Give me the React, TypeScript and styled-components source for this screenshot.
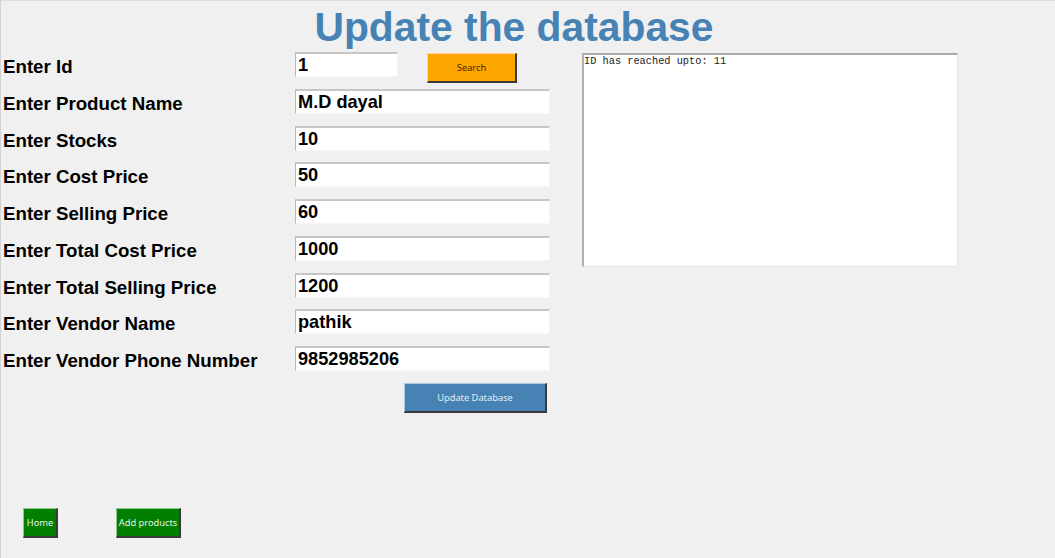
import React from "react";
import styled, { createGlobalStyle } from "styled-components";

const GlobalStyle = createGlobalStyle`
  html, body {
    margin: 0;
    padding: 0;
    background: #f0f0f0;
  }
  body {
    font-family: "Liberation Sans", Arial, sans-serif;
  }
  * { box-sizing: border-box; }
`;

const Page = styled.div`
  min-height: 100vh;
  display: flex;
  flex-direction: column;
  border-top: 1px solid #dcdcdc;
  border-left: 1px solid #d2d2d2;
  padding-bottom: 20px;
`;

const Title = styled.h1`
  margin: 6px 28px 0 0;
  text-align: center;
  font-family: "Liberation Sans", Arial, sans-serif;
  font-weight: bold;
  font-size: 40.8px;
  line-height: 40px;
  color: #4682b4;
`;

const Main = styled.div`
  display: flex;
  align-items: flex-start;
  margin-top: 5px;
  padding-left: 2px;
`;

const Form = styled.div`
  width: 547px;
  display: flex;
  flex-direction: column;
  gap: 11.75px;
`;

const Row = styled.div`
  display: grid;
  grid-template-columns: 292px 1fr;
  height: 25px;
`;

const Label = styled.label`
  font-family: "Liberation Sans", Arial, sans-serif;
  font-weight: bold;
  font-size: 18.7px;
  line-height: 25px;
  padding-top: 2px;
  color: #000;
  white-space: nowrap;
`;

const FieldGroup = styled.div`
  display: flex;
  align-items: flex-start;
`;

const Input = styled.input<{ $width?: number }>`
  width: ${(p) => (p.$width ? `${p.$width}px` : "100%")};
  height: 25px;
  margin: 0;
  padding: 1px 0 0 2px;
  background: #ffffff;
  border-top: 2px solid #c6c6c6;
  border-left: 1px solid #b8b8b8;
  border-right: 1px solid #f7f7f7;
  border-bottom: 1px solid #f7f7f7;
  font-family: "Liberation Sans", Arial, sans-serif;
  font-weight: bold;
  font-size: 18.2px;
  color: #000;
  outline: none;
`;

const Button = styled.button<{
  $bg: string;
  $fg: string;
  $w: number;
  $ml?: number;
  $mt?: number;
}>`
  width: ${(p) => p.$w}px;
  height: 30px;
  margin: ${(p) => p.$mt ?? 0}px 0 0 ${(p) => p.$ml ?? 0}px;
  padding: 0;
  background: ${(p) => p.$bg};
  color: ${(p) => p.$fg};
  border-top: 1px solid rgba(255, 255, 255, 0.55);
  border-left: 1px solid rgba(255, 255, 255, 0.55);
  border-right: 2px solid #3a3a3a;
  border-bottom: 2px solid #3a3a3a;
  font-family: "Noto Sans", "Open Sans", sans-serif;
  font-size: 9.3px;
  line-height: 1;
  cursor: pointer;
  flex-shrink: 0;
`;

const UpdateButton = styled(Button)`
  align-self: flex-end;
  margin-right: 3px;
`;

const Output = styled.div`
  margin-left: 32px;
  margin-top: 1px;
  width: 376px;
  height: 214px;
  background: #ffffff;
  border-top: 2px solid #a9a9a9;
  border-left: 2px solid #b0b0b0;
  border-right: 1px solid #e6e6e6;
  border-bottom: 1px solid #e6e6e6;
  padding: 0;
  font-family: "Liberation Mono", "Courier New", monospace;
  font-size: 10.3px;
  line-height: 12px;
  color: #222;
  white-space: pre;
`;

const Footer = styled.div`
  margin-top: auto;
  display: flex;
  padding-left: 22px;
  gap: 58px;
`;

const fields: { label: string; value: string }[] = [
  { label: "Enter Product Name", value: "M.D dayal" },
  { label: "Enter Stocks", value: "10" },
  { label: "Enter Cost Price", value: "50" },
  { label: "Enter Selling Price", value: "60" },
  { label: "Enter Total Cost Price", value: "1000" },
  { label: "Enter Total Selling Price", value: "1200" },
  { label: "Enter Vendor Name", value: "pathik" },
  { label: "Enter Vendor Phone Number", value: "9852985206" },
];

export default function App() {
  return (
    <>
      <GlobalStyle />
      <Page>
        <Title>Update the database</Title>
        <Main>
          <Form>
            <Row>
              <Label>Enter Id</Label>
              <FieldGroup>
                <Input $width={103} defaultValue="1" />
                <Button $bg="#ffa500" $fg="#3b2a00" $w={90} $ml={29} $mt={1}>
                  Search
                </Button>
              </FieldGroup>
            </Row>
            {fields.map((f) => (
              <Row key={f.label}>
                <Label>{f.label}</Label>
                <Input defaultValue={f.value} />
              </Row>
            ))}
            <UpdateButton $bg="#4682b4" $fg="#e4ecf5" $w={143}>
              Update Database
            </UpdateButton>
          </Form>
          <Output>{"ID has reached upto: 11"}</Output>
        </Main>
        <Footer>
          <Button $bg="#007f00" $fg="#e6f3e6" $w={35}>
            Home
          </Button>
          <Button $bg="#007f00" $fg="#e6f3e6" $w={65}>
            Add products
          </Button>
        </Footer>
      </Page>
    </>
  );
}
